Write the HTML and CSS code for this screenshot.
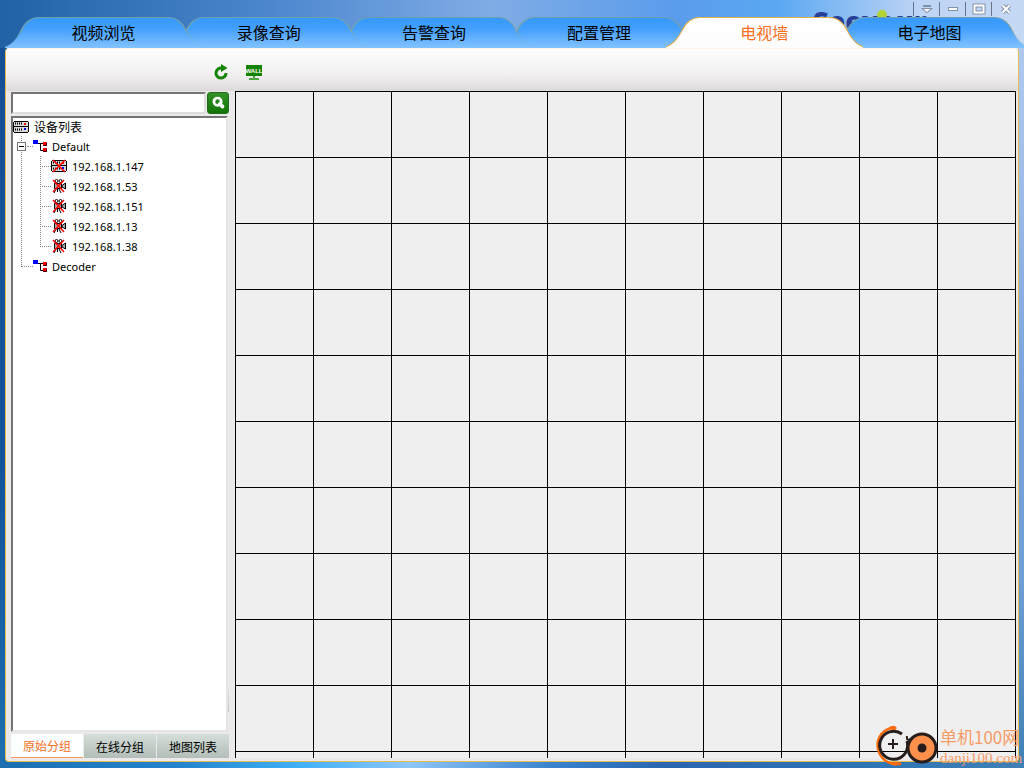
FILE: index.html
```html
<!DOCTYPE html>
<html lang="zh-CN">
<head>
<meta charset="utf-8">
<title>电视墙</title>
<link rel="stylesheet" href="styles.css">
</head>
<body>
<svg class="defs" aria-hidden="true">
  <defs>
    <linearGradient id="blue" x1="0" y1="0" x2="0" y2="1">
      <stop offset="0" stop-color="#3599fc"/><stop offset=".35" stop-color="#429ffd"/><stop offset="1" stop-color="#82c2ff"/>
    </linearGradient>
    <linearGradient id="white" x1="0" y1="0" x2="0" y2="1">
      <stop offset="0" stop-color="#fff"/><stop offset="1" stop-color="#fcfdfc"/>
    </linearGradient>
    <linearGradient id="edge" x1="0" y1="0" x2="0" y2="1">
      <stop offset="0" stop-color="#6f9fb0"/><stop offset=".45" stop-color="#7fa3a0"/><stop offset=".7" stop-color="#7fa3a0" stop-opacity=".2"/>
    </linearGradient>
    <symbol id="tab" viewBox="0 0 196 32" preserveAspectRatio="none">
      <path d="M0 31C8 28 12 22 16 14C20 5 26 .5 34 .5H162C170 .5 176 5 180 14C184 22 188 28 196 31V32H0Z"/>
      <path class="edge" d="M0 31C8 28 12 22 16 14C20 5 26 .5 34 .5H162C170 .5 176 5 180 14C184 22 188 28 196 31"/>
    </symbol>
    <symbol id="server" viewBox="0 0 16 12">
      <path d="M1 .5H15M.5 1V11M15.5 1V11M1 5.5H15M1 11.500H15" stroke="#000"/>
      <path d="M1 1H15V5H1ZM1 6H15V11H1Z" fill="#d8d8d8"/>
      <path d="M2 2.500H10M2 8.500H10" stroke="#000" stroke-width="2" stroke-dasharray="1 1"/>
      <path d="M11 2H13V4H11Z" fill="red"/><path d="M11 7H13V9H11Z" fill="#00f"/>
    </symbol>
    <symbol id="group" viewBox="0 0 16 12">
      <path d="M5 3.500H10M7.500 3V10.500H10" fill="none" stroke="#000"/>
      <path d="M0 0H5V4H0Z" fill="#00f"/><path d="M10 2H14V6H10ZM10 8H14V12H10Z" fill="red"/>
      <path d="M10 5.500H13.500V3M10 11.500H13.500V9" fill="none" stroke="#400"/>
    </symbol>
    <symbol id="cross" viewBox="0 0 14 14"><path d="M1 1L13 13M13 1L1 13" stroke="#f00" stroke-width="1.500"/></symbol>
    <symbol id="camera" viewBox="0 0 16 14">
      <circle cx="5.500" cy="2" r="1.500" fill="#fff" stroke="#000"/><circle cx="9.500" cy="2" r="1.500" fill="#fff" stroke="#000"/>
      <path d="M3.500 4.500H10.500V9.500H3.500ZM11 6.500L14.500 4V10L11 8Z" fill="#aaa" stroke="#000"/>
      <path d="M5 10L3 14M8 10L10 14M6.500 10V13" stroke="#000"/>
      <path d="M2 1L13 13M13 1L2 13" stroke="#f00" stroke-width="1.500"/>
    </symbol>
  </defs>
</svg>
<div class="app">
  <header class="header">
    <svg class="logo" viewBox="0 0 104 30" role="img" aria-label="Seeyour">
      <text class="logo-text" x="0" y="27">Seeyour</text>
      <circle cx="69" cy="11" r="5" fill="#b2d334"/>
    </svg>
    <div class="window-buttons">
      <button aria-label="菜单"><svg viewBox="0 0 12 12"><path d="M2 3H10M2.500 6H9.500L6 9Z"/></svg></button>
      <button aria-label="最小化"><svg viewBox="0 0 12 12"><path d="M2 5H10V7H2Z"/></svg></button>
      <button aria-label="最大化"><svg viewBox="0 0 12 12"><path class="outline" d="M1.500 2.500H10.500V9.500H1.500Z"/><path class="hollow" d="M1.500 2.500H10.500V9.500H1.500Z"/></svg></button>
      <button aria-label="关闭"><svg viewBox="0 0 12 12"><path class="outline" d="M2.500 2.500L9.500 9.500M9.500 2.500L2.500 9.500"/><path class="hollow" d="M2.500 2.500L9.500 9.500M9.500 2.500L2.500 9.500"/></svg></button>
    </div>
    <nav class="tabs">
      <button class="tab"><svg><use href="#tab"/></svg><span>视频浏览</span></button>
      <button class="tab"><svg><use href="#tab"/></svg><span>录像查询</span></button>
      <button class="tab"><svg><use href="#tab"/></svg><span>告警查询</span></button>
      <button class="tab"><svg><use href="#tab"/></svg><span>配置管理</span></button>
      <button class="tab active" aria-current="page"><svg><use href="#tab"/></svg><span>电视墙</span></button>
      <button class="tab"><svg><use href="#tab"/></svg><span>电子地图</span></button>
    </nav>
  </header>
  <main class="panel">
    <div class="toolbar">
      <button aria-label="刷新"><svg viewBox="0 0 16 16"><path d="M9 4.200A5 5 0 1 0 13 9" fill="none" stroke="#138400" stroke-width="3"/><path d="M8 0L14.500 4L8 8Z" fill="#138400"/></svg></button>
      <button aria-label="电视墙"><svg viewBox="0 0 16 16"><path d="M0 1H16V12H0Z" fill="#138400"/><path d="M7 12H9V14H7ZM3 14H13V16H3Z" fill="#4da442"/><text class="wall-text" x="8" y="9">WALL</text></svg></button>
    </div>
    <div class="content">
      <aside class="sidebar">
        <form class="search">
          <input type="text" aria-label="搜索设备">
          <button type="button" aria-label="搜索"><svg viewBox="0 0 22 22"><circle cx="10.500" cy="9.500" r="4" fill="none" stroke="#fff" stroke-width="3"/><path d="M13 12L16 15" stroke="#fff" stroke-width="4" stroke-linecap="round"/></svg></button>
        </form>
        <div class="tree">
          <div class="row root"><svg class="server"><use href="#server"/></svg><span>设备列表</span></div>
          <ul class="groups">
            <li>
              <div class="row"><button class="toggle" aria-label="折叠 Default"></button><i class="stub"></i><svg class="group"><use href="#group"/></svg><span>Default</span></div>
              <ul class="devices">
                <li class="row"><i class="stub"></i><svg class="device" viewBox="0 0 16 14"><use href="#server" y="1" width="16" height="12"/><use href="#cross" x="1" width="14" height="14"/></svg><span>192.168.1.147</span></li>
                <li class="row"><i class="stub"></i><svg class="device"><use href="#camera"/></svg><span>192.168.1.53</span></li>
                <li class="row"><i class="stub"></i><svg class="device"><use href="#camera"/></svg><span>192.168.1.151</span></li>
                <li class="row"><i class="stub"></i><svg class="device"><use href="#camera"/></svg><span>192.168.1.13</span></li>
                <li class="row"><i class="stub"></i><svg class="device"><use href="#camera"/></svg><span>192.168.1.38</span></li>
              </ul>
            </li>
            <li><div class="row leaf"><i class="stub"></i><svg class="group"><use href="#group"/></svg><span>Decoder</span></div></li>
          </ul>
        </div>
        <nav class="side-tabs">
          <button class="current">原始分组</button>
          <button>在线分组</button>
          <button>地图列表</button>
        </nav>
      </aside>
      <section class="wall" id="wall" aria-label="电视墙"></section>
    </div>
  </main>
  <div class="mark">
    <svg viewBox="0 0 64 44" aria-hidden="true">
      <path d="M21 4C8 3 1 14 3 25C5 34 12 41 26 40" fill="none" stroke="#ff6b0b" stroke-width="2.500"/>
      <path d="M12 5Q18-1 22 4L20 6ZM13 39Q21 44 27 39L22 38Z" fill="#ff6b0b"/>
      <path d="M27 10A14 14 0 1 0 32 17" fill="none" stroke="#271d1d" stroke-width="3"/>
      <path d="M18 15V25M13 20H23M32 12Q31 19 38 13" fill="none" stroke="#271d1d" stroke-width="2"/>
      <circle cx="47" cy="24" r="14" fill="#ff914d" stroke="#271d1d" stroke-width="3"/>
      <circle cx="47" cy="24" r="4.500" fill="#271d1d"/>
    </svg>
    <div class="mark-text"><span class="mark-name">单机100网</span><span class="mark-url">danji100.com</span></div>
  </div>
</div>
<script src="wall.js"></script>
</body>
</html>
```
FILE: styles.css
```css
* { box-sizing: border-box; }
body {
  margin: 0;
  font-family: "Noto Sans", "Noto Sans CJK SC", sans-serif;
  font-size: 12px;
  color: #000;
}
button { border: 0; padding: 0; background: none; font: inherit; color: inherit; }
ul { list-style: none; margin: 0; padding: 0; }
svg { display: block; overflow: visible; }
.defs { position: absolute; width: 0; height: 0; }

.app {
  position: relative;
  display: flex;
  flex-direction: column;
  height: 100vh;
  padding: 0 5px 6px;
  overflow: hidden;
  background:
    linear-gradient(90deg, #2062a5, #4b86ce 26%, #80ace5 48%, #5a9cec 66%, #5ba8f2 76%, #bfd5f5 90%, #c5d8f4) top / 100% 48px no-repeat,
    linear-gradient(90deg, #1c6fb0, #2585cf 18%, #3fb0f5 29%, #8ec6f7 40%, #3a82cc 54%, #2a66b0 65%, #2f74b5 85%, #3f80b5) bottom / 100% 6px no-repeat,
    linear-gradient(#b6cdf0, #a3c0ea 20%, #7ba3dc 50%, #6f9fd4 75%, #3f80b5) right / 50% 100% no-repeat,
    linear-gradient(#164f94, #12529b 60%, #1c6fb0);
}

.header { position: relative; display: flex; flex-direction: column; flex: none; }
.window-buttons { display: flex; justify-content: flex-end; height: 16px; padding-top: 2px; }
.window-buttons button {
  display: flex; align-items: center; justify-content: center;
  width: 26px; border-left: 1px solid #66758c;
}
.window-buttons button:last-child { width: 28px; }
.window-buttons svg { width: 12px; height: 12px; fill: #fff; stroke: #8492a8; stroke-width: 2; paint-order: stroke; }
.window-buttons .outline { fill: none; stroke: #8492a8; stroke-width: 4; }
.window-buttons .hollow { fill: none; stroke: #fff; stroke-width: 2; }
.logo { position: absolute; right: 102px; top: 4px; width: 104px; height: 30px; }
.logo-text { font: 800 27px "Open Sans", sans-serif; fill: #283f98; }

.tabs { position: relative; display: flex; padding: 1px 7px 0 16px; }
.tab { position: relative; flex: 1; height: 31px; font-size: 16px; line-height: 28px; }
.tab svg { position: absolute; left: -16px; top: 0; width: calc(100% + 32px); height: 31px; fill: url(#blue); }
.tab span { position: relative; }
.edge { fill: none; stroke: var(--edge, url(#edge)); stroke-width: 1; }
.tab:nth-child(1) { z-index: 4; }
.tab:nth-child(2) { z-index: 3; }
.tab:nth-child(3) { z-index: 2; }
.tab:nth-child(4) { z-index: 1; }
.tab.active { z-index: 5; color: #f8701d; --edge: #e3b04c; }
.tab.active svg { fill: url(#white); }

.panel {
  display: flex; flex-direction: column; flex: 1; min-height: 0;
  border: 1px solid #e6bd4f;
  border-top-color: #fff4e6;
  border-radius: 4px;
  background: #ece9ea;
  overflow: hidden;
}
.toolbar {
  display: flex; align-items: flex-start; flex: none; gap: 17px; height: 42px; padding: 15px 0 0 207px;
  background: linear-gradient(#fdfdfd, #f2f0f1 60%, #dddbd9);
}
.toolbar svg { width: 16px; height: 16px; }
.wall-text { font: 700 6px "Liberation Sans", sans-serif; fill: #fff; text-anchor: middle; }
.content { display: flex; flex: 1; gap: 6px; min-height: 0; padding: 0 2px 3px 5px; }

.sidebar {
  display: flex; flex-direction: column; gap: 2px; width: 218px; padding-top: 1px;
  background: linear-gradient(#e4e8e6, #bcc6c1) right bottom 46px / 1px 24px no-repeat;
}
.search { display: flex; gap: 1px; }
.search input {
  flex: 1; min-width: 0; height: 22px; padding: 0 4px; outline: 0;
  border: 2px solid; border-color: #757575 #dedede #dedede #757575;
  background: #fff; font: inherit;
}
.search button { width: 22px; height: 22px; border-radius: 3px; background: linear-gradient(#339127, #127407); border: 1px solid #226d1b; }
.search svg { width: 20px; height: 20px; }

.tree {
  flex: 1; min-height: 0; margin-right: 1px; overflow: hidden;
  border: 2px solid; border-color: #757575 #e5e5e5 #e5e5e5 #757575;
  background: #fff;
}
.row { display: flex; align-items: center; height: 20px; font-size: 11px; white-space: nowrap; }
.row.root { gap: 5px; height: 18px; font-size: 12px; }
.server { width: 16px; height: 12px; }
.toggle { width: 9px; height: 9px; margin: 0 1px 0 4px; border: 1px solid #777; background: linear-gradient(#000, #000) center / 5px 1px no-repeat #fff; }
.stub { width: 6px; border-top: 1px dotted #888; }
.group { width: 16px; height: 12px; margin-right: 3px; }
.groups {
  background: repeating-linear-gradient(#888 0 1px, transparent 1px 2px) 8px 0 / 1px 130px no-repeat;
}
.devices {
  padding-left: 27px;
  background: repeating-linear-gradient(#888 0 1px, transparent 1px 2px) 27px 0 / 1px 90px no-repeat;
}
.devices .stub { width: 11px; }
.device { width: 16px; height: 14px; margin-right: 5px; }
.leaf { padding-left: 8px; }
.leaf .stub { width: 12px; }

.side-tabs { display: flex; gap: 1px; flex: none; }
.side-tabs button { flex: 1; height: 24px; padding-top: 1px; background: linear-gradient(#d5ddd9, #b3beb8); }
.side-tabs .current { color: #f8701d; background: #fcffff; border-bottom: 1px solid #f59a63; }

.wall {
  display: grid; flex: 1; min-width: 0; overflow: hidden;
  grid-template-columns: repeat(10, 1fr);
  grid-auto-rows: 66px;
  border: solid #000; border-width: 1px 0 0 1px;
  background: #efefef;
}
.cell { border: solid #000; border-width: 0 1px 1px 0; }

.mark { position: absolute; right: 4px; bottom: 0; display: flex; gap: 1px; color: #f79b66; }
.mark > svg { width: 64px; height: 44px; }
.mark-text { display: flex; flex-direction: column; width: 80px; font-family: "Liberation Serif", serif; white-space: nowrap; }
.mark-name { font: 17px/26px "Noto Sans CJK SC", sans-serif; }
.mark-url { font-size: 15px; line-height: 16px; }
```
FILE: wall.js
```js
const wall = document.getElementById("wall");
const columns = 10;
const rows = 11;

for (let i = 0; i < columns * rows; i++) {
  const cell = document.createElement("div");
  cell.className = "cell";
  wall.append(cell);
}
```
